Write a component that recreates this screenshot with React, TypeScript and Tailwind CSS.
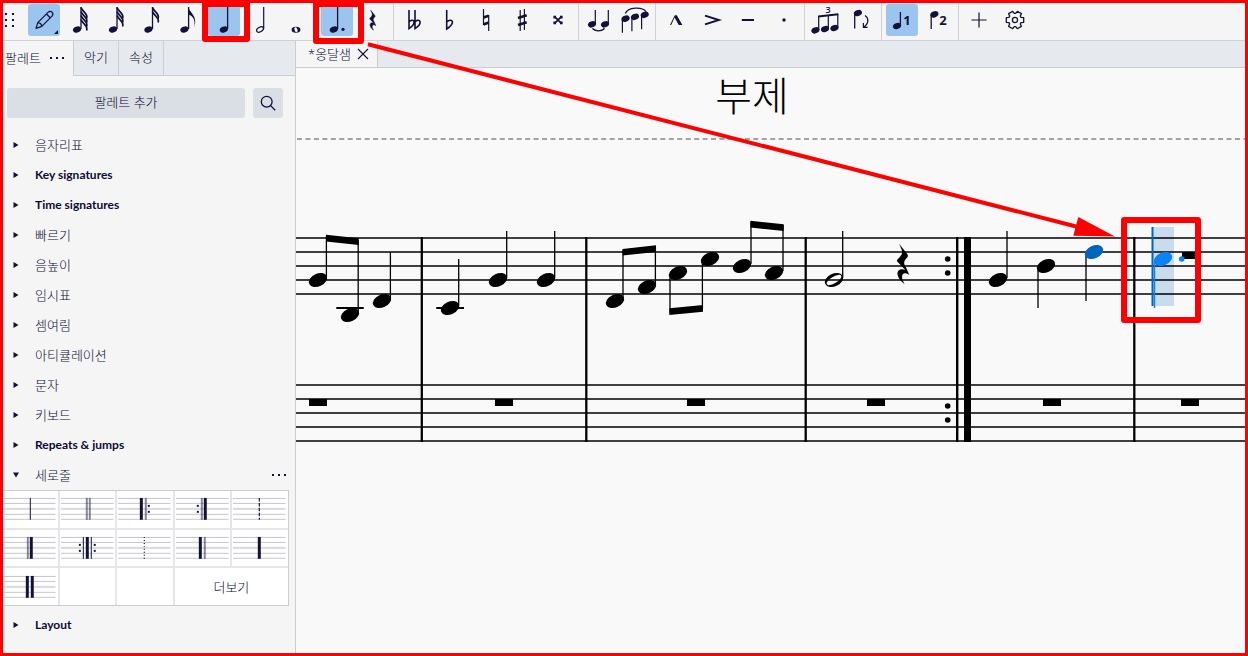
import { useState, type ReactNode } from 'react';
import clsx from 'clsx';

const INK = '#11113a';

type HeadProps = { x: number; y: number; fill?: string };

function SmallHead({ x, y, fill = INK }: HeadProps) {
  return <ellipse cx={x} cy={y} rx="4.2" ry="3" fill={fill} transform={`rotate(-22 ${x} ${y})`} />;
}

// Short note value with one to four flags
function FlaggedNote({ flags, head, stem }: { flags: number; head: number; stem: number }) {
  return (
    <>
      <SmallHead x={head} y={25.5} />
      <path d={`M${stem} 3V25`} stroke={INK} strokeWidth="1.3" />
      {flags === 1 ? (
        <path
          d={`M${stem} 3C${stem + 0.6} 9 ${stem + 10} 12 ${stem + 5.4} 23.6C${stem + 7.6} 14.6 ${stem + 3} 12 ${stem} 10.6Z`}
          fill={INK}
        />
      ) : (
        Array.from({ length: flags }, (_, i) => {
          const y = 3.5 + i * 4;
          return (
            <path
              key={i}
              d={`M${stem} ${y}C${stem + 1} ${y + 4} ${stem + 7.6} ${y + 6} ${stem + 5.6} ${y + 11}`}
              fill="none"
              stroke={INK}
              strokeWidth="1.7"
            />
          );
        })
      )}
    </>
  );
}

const gearPoints = [0, 1, 2, 3, 4, 5]
  .flatMap((tooth) =>
    [
      [-24, 6.6],
      [-15, 9],
      [15, 9],
      [24, 6.6],
    ].map(([offset, r]) => {
      const a = ((tooth * 60 + offset) * Math.PI) / 180;
      return `${(16 + r * Math.cos(a)).toFixed(2)},${(16 + r * Math.sin(a)).toFixed(2)}`;
    })
  )
  .join(' ');

const REST_PATH =
  'M2.3 0L10 9.6C11.8 11.8 11.6 12.6 10 14.2C6.8 17.6 6.8 19.6 9 23L12.6 31.4C9.6 29 6.3 28.8 5.5 31.8C4.9 34.6 6 37.2 8 40.5C3.4 37.2 0 32.4 0.9 28.6C1.8 25.4 5.2 24.6 8.6 26.4L0.3 17.6C0 16.6 0.4 16 1.4 15C5 11.6 6.3 9.4 4.8 5.6Z';

type Tool = { id: string; label: string; art: ReactNode };

const durations: Tool[] = [
  { id: '64th', label: '64th note', art: <FlaggedNote flags={4} head={13} stem={17} /> },
  { id: '32nd', label: '32nd note', art: <FlaggedNote flags={3} head={13} stem={17} /> },
  { id: '16th', label: '16th note', art: <FlaggedNote flags={2} head={12.4} stem={16.5} /> },
  { id: '8th', label: 'Eighth note', art: <FlaggedNote flags={1} head={12.4} stem={16.6} /> },
  {
    id: 'quarter',
    label: 'Quarter note',
    art: (
      <>
        <SmallHead x={15.8} y={25.5} />
        <path d="M19.6 3V25" stroke={INK} strokeWidth="1.3" />
      </>
    ),
  },
  {
    id: 'half',
    label: 'Half note',
    art: (
      <>
        <ellipse cx="16" cy="25.5" rx="3.7" ry="2.2" fill="none" stroke={INK} strokeWidth="1.2" transform="rotate(-28 16 25.5)" />
        <path d="M19.7 3V25" stroke={INK} strokeWidth="1.2" />
      </>
    ),
  },
  {
    id: 'whole',
    label: 'Whole note',
    art: (
      <>
        <ellipse cx="16" cy="25.7" rx="4.4" ry="3" fill={INK} />
        <ellipse cx="16" cy="25.7" rx="1.5" ry="2.5" fill="#f5f5f6" transform="rotate(-20 16 25.7)" />
      </>
    ),
  },
];

const rhythm: Tool[] = [
  {
    id: 'dot',
    label: 'Augmentation dot',
    art: (
      <>
        <SmallHead x={12.8} y={25.5} />
        <path d="M16.6 3V25" stroke={INK} strokeWidth="1.3" />
        <circle cx="22" cy="25.3" r="1.6" fill={INK} />
      </>
    ),
  },
  {
    id: 'rest',
    label: 'Rest',
    art: <path d={REST_PATH} fill={INK} stroke={INK} strokeWidth="1" transform="translate(12.6 6.3) scale(.49)" />,
  },
];

const accidentals: Tool[] = [
  {
    id: 'double-flat',
    label: 'Double flat',
    art: (
      <path
        d="M11 6V24.5C14 22.6 16.4 20.4 16 17.6C15.6 15.6 12.6 16 11 18M17 6V24.5C20.4 22.4 22.6 20.2 22 17.6C21.4 15.6 18.6 16 17 18"
        fill="none"
        stroke={INK}
        strokeWidth="1.6"
      />
    ),
  },
  {
    id: 'flat',
    label: 'Flat',
    art: <path d="M12.7 6V25C16 22.8 18.8 20.2 18.4 17.6C18 15.6 14.8 15.8 12.7 18" fill="none" stroke={INK} strokeWidth="1.6" />,
  },
  {
    id: 'natural',
    label: 'Natural',
    art: (
      <>
        <path d="M13.5 5V21M18.7 11V27" stroke={INK} strokeWidth="1.2" />
        <path d="M13.5 13.6L18.7 11.8M13.5 20.4L18.7 18.6" stroke={INK} strokeWidth="2.6" />
      </>
    ),
  },
  {
    id: 'sharp',
    label: 'Sharp',
    art: (
      <>
        <path d="M14.2 6V27M18.4 5V26" stroke={INK} strokeWidth="1.2" />
        <path d="M12 14L20.7 11.2M12 21L20.7 18.2" stroke={INK} strokeWidth="2.6" />
      </>
    ),
  },
  {
    id: 'double-sharp',
    label: 'Double sharp',
    art: (
      <>
        <path d="M12.4 12.4L19.6 19.6M19.6 12.4L12.4 19.6" stroke={INK} strokeWidth="1.6" />
        <path d="M11.4 11.8h2.6v2.6h-2.6zM18 11.8h2.6v2.6h-2.6zM11.4 17.6h2.6v2.6h-2.6zM18 17.6h2.6v2.6h-2.6z" fill={INK} />
      </>
    ),
  },
];

const phrasing: Tool[] = [
  {
    id: 'tie',
    label: 'Tie',
    art: (
      <>
        <SmallHead x={9} y={20.3} />
        <SmallHead x={22} y={20.3} />
        <path d="M12.3 6V20M25.3 6V20" stroke={INK} strokeWidth="1.2" />
        <path d="M9.5 24.4C12 27.6 19 27.6 21.5 24.4" fill="none" stroke={INK} strokeWidth="1.3" />
      </>
    ),
  },
  {
    id: 'slur',
    label: 'Slur',
    art: (
      <>
        <SmallHead x={6.6} y={14.6} />
        <SmallHead x={16} y={12.8} />
        <SmallHead x={25.7} y={10.8} />
        <path d="M3.4 15V28.7M12.9 13V27.3M22.6 11V25.3" stroke={INK} strokeWidth="1.2" />
        <path d="M6.3 9.6C9 3 23 2.4 27 7.6" fill="none" stroke={INK} strokeWidth="1.3" />
      </>
    ),
  },
];

const articulations: Tool[] = [
  { id: 'marcato', label: 'Marcato', art: <path d="M10 21L14.8 11.3H16.8L22.4 21H18.7L14.6 13.6L11.2 21Z" fill={INK} /> },
  { id: 'accent', label: 'Accent', art: <path d="M9 11.6L22.8 16L9 20.4" fill="none" stroke={INK} strokeWidth="2" /> },
  { id: 'tenuto', label: 'Tenuto', art: <path d="M9.8 16H22" stroke={INK} strokeWidth="2" /> },
  { id: 'staccato', label: 'Staccato', art: <circle cx="16" cy="16" r="1.7" fill={INK} /> },
];

const tuplets: Tool[] = [
  {
    id: 'tuplet',
    label: 'Tuplet',
    art: (
      <>
        <SmallHead x={6.4} y={26.3} />
        <SmallHead x={16} y={25} />
        <SmallHead x={25.4} y={24} />
        <path d="M9.7 12V26M19.3 11V25M28.8 10V24" stroke={INK} strokeWidth="1.2" />
        <path d="M9.2 12.4L29.3 10.3" stroke={INK} strokeWidth="2" />
        <text x="19" y="9" textAnchor="middle" fontSize="9" fontWeight="600" fill={INK}>
          3
        </text>
      </>
    ),
  },
  {
    id: 'flip',
    label: 'Flip direction',
    art: (
      <>
        <SmallHead x={12.9} y={9} />
        <path d="M9.7 9.5V24.6" stroke={INK} strokeWidth="1.3" />
        <path d="M20 11.5C24 14 24 19.5 18.8 23M18.4 19V23.4H22.6" fill="none" stroke={INK} strokeWidth="1.2" />
      </>
    ),
  },
];

const voices: Tool[] = [
  {
    id: 'voice1',
    label: 'Voice 1',
    art: (
      <>
        <SmallHead x={11} y={22} />
        <path d="M14.4 8V22" stroke={INK} strokeWidth="1.3" />
        <text x="21" y="21" textAnchor="middle" fontSize="13" fontWeight="700" fill={INK}>
          1
        </text>
      </>
    ),
  },
  {
    id: 'voice2',
    label: 'Voice 2',
    art: (
      <>
        <SmallHead x={12.4} y={10.4} />
        <path d="M9.2 11V25" stroke={INK} strokeWidth="1.3" />
        <text x="21" y="21" textAnchor="middle" fontSize="13" fontWeight="700" fill={INK}>
          2
        </text>
      </>
    ),
  },
];

const extras: Tool[] = [
  { id: 'add', label: 'Add', art: <path d="M8.4 16H23.6M16 8.4V23.6" stroke={INK} strokeWidth="1.2" /> },
  {
    id: 'settings',
    label: 'Customize toolbar',
    art: (
      <g fill="none" stroke={INK} strokeWidth="1.3" strokeLinejoin="round">
        <polygon points={gearPoints} />
        <circle cx="16" cy="16" r="2.6" />
      </g>
    ),
  },
];

const noteInput: Tool = {
  id: 'note-input',
  label: 'Note input',
  art: (
    <>
      <path
        d="M8 24.4L9.8 18.6L20 8.4C21.4 7 23 7.2 24.1 8.2C25.2 9.4 25.2 10.8 24 12.2L13.8 22.4ZM18.4 10L22.4 14M9.8 18.6C11.8 18.8 13.6 20.4 13.8 22.4"
        fill="none"
        stroke={INK}
        strokeWidth="1.2"
        strokeLinejoin="round"
      />
      <path d="M30 26V30H26Z" fill={INK} />
    </>
  ),
};

function ToolButton({ tool, active, onClick }: { tool: Tool; active: boolean; onClick: () => void }) {
  return (
    <button
      type="button"
      aria-label={tool.label}
      aria-pressed={active}
      onClick={onClick}
      className={clsx('h-8 w-8 shrink-0 rounded-[3px]', active && 'bg-[#9bc5ee]')}
    >
      <svg viewBox="0 0 32 32" className="h-8 w-8 overflow-visible">
        {tool.art}
      </svg>
    </button>
  );
}

function Toolbar() {
  const [active, setActive] = useState(['note-input', 'quarter', 'dot', 'voice1']);

  const toggle = (id: string) =>
    setActive((prev) => (prev.includes(id) ? prev.filter((a) => a !== id) : [...prev, id]));

  const groups = [durations, rhythm, accidentals, phrasing, articulations, tuplets, voices, extras];

  return (
    <div role="toolbar" className="flex h-[41px] shrink-0 border-b border-[#cfd1d5] bg-[#f5f5f6]">
      <svg viewBox="0 0 28 40" className="h-10 w-7 shrink-0" fill={INK}>
        {[14, 20, 26].map((y) => (
          <g key={y}>
            <rect x="5" y={y - 1} width="2" height="2" />
            <rect x="12" y={y - 1} width="2" height="2" />
          </g>
        ))}
      </svg>
      <div className="flex items-center">
        <ToolButton tool={noteInput} active={active.includes('note-input')} onClick={() => toggle('note-input')} />
      </div>
      {groups.map((group, i) => (
        <div
          key={i}
          className={clsx('flex items-center gap-1 px-1', i < groups.length - 1 && 'border-r border-[#cfd1d5]')}
        >
          {group.map((tool) => (
            <ToolButton key={tool.id} tool={tool} active={active.includes(tool.id)} onClick={() => toggle(tool.id)} />
          ))}
        </div>
      ))}
    </div>
  );
}

const palettes = [
  '음자리표',
  'Key signatures',
  'Time signatures',
  '빠르기',
  '음높이',
  '임시표',
  '셈여림',
  '아티큘레이션',
  '문자',
  '키보드',
  'Repeats & jumps',
  '세로줄',
  'Layout',
];

// Strokes are [x, width, opacity]; dots are the x of a repeat sign
type Barline = { name: string; strokes?: number[][]; dots?: number[]; dash?: string };

const barlines: Barline[] = [
  { name: 'Normal', strokes: [[28, 1, 1]] },
  { name: 'Double', strokes: [[26, 2, 0.5], [29, 2, 0.5]] },
  { name: 'Start repeat', strokes: [[23, 3, 1], [28, 2, 0.5]], dots: [32] },
  { name: 'End repeat', strokes: [[26, 2, 0.5], [29, 3, 1]], dots: [23] },
  { name: 'Dashed', dash: '3.5 1.5' },
  { name: 'Final', strokes: [[25, 2, 0.5], [28, 3, 1]] },
  { name: 'End-start repeat', strokes: [[23, 1, 1], [26, 3, 1], [31, 1, 1]], dots: [20, 35] },
  { name: 'Dotted', dash: '1 2' },
  { name: 'Reverse final', strokes: [[24, 3, 1], [29, 2, 0.5]] },
  { name: 'Heavy', strokes: [[26, 3, 1]] },
  { name: 'Heavy double', strokes: [[24, 3, 1], [29, 3, 1]] },
];

function BarlineArt({ bar }: { bar: Barline }) {
  return (
    <svg viewBox="0 0 56 36" className="w-full">
      <g fill="#c5c5cd">
        <rect x="1" y="7" width="53" height="1" />
        <rect x="1" y="12" width="53" height="1" />
        <rect x="1" y="17" width="53" height="2" opacity=".65" />
        <rect x="1" y="23" width="53" height="1" />
        <rect x="1" y="28" width="53" height="1" />
      </g>
      {bar.dash && <path d="M27.5 7V29" stroke={INK} strokeWidth="1.2" strokeDasharray={bar.dash} />}
      {bar.strokes?.map(([x, w, opacity]) => (
        <rect key={x} x={x} y="7" width={w} height="22" fill={INK} opacity={opacity} />
      ))}
      {bar.dots?.map((x) => (
        <g key={x} fill={INK}>
          <rect x={x - 1} y="14" width="2" height="2" />
          <rect x={x - 1} y="20" width="2" height="2" />
        </g>
      ))}
    </svg>
  );
}

function BarlinePalette() {
  return (
    <div className="mb-1 mr-1.5 grid h-[116px] grid-cols-5 grid-rows-3 gap-0.5 border border-[#cccdd2] bg-[#e6e6e8]">
      {barlines.map((bar) => (
        <button key={bar.name} type="button" aria-label={bar.name} className="flex items-center bg-white">
          <BarlineArt bar={bar} />
        </button>
      ))}
      <div className="bg-white" />
      <div className="bg-white" />
      <button type="button" className="col-span-2 bg-white">
        더보기
      </button>
    </div>
  );
}

function MoreDots() {
  return (
    <svg viewBox="0 0 16 4" className="h-1 w-4" fill={INK}>
      <rect x="1" y="1" width="2" height="2" />
      <rect x="7" y="1" width="2" height="2" />
      <rect x="13" y="1" width="2" height="2" />
    </svg>
  );
}

function PalettePanel() {
  const [open, setOpen] = useState('세로줄');

  return (
    <aside className="flex w-[296px] shrink-0 flex-col border-r border-[#cccdd2] bg-[#f5f5f6]">
      <div role="tablist" className="flex h-[35px] shrink-0">
        <div className="flex w-[73px] items-center gap-2 pb-0.5 pl-[5px]">
          <button type="button" role="tab" aria-selected="true">
            팔레트
          </button>
          <button type="button" aria-label="Palette options">
            <MoreDots />
          </button>
        </div>
        <div className="flex flex-1 border-b border-l border-[#cccdd2] bg-[#e6e9ed]">
          <button type="button" role="tab" aria-selected="false" className="w-[45px] border-r border-[#cccdd2] pb-0.5">
            악기
          </button>
          <button type="button" role="tab" aria-selected="false" className="w-[45px] border-r border-[#cccdd2] pb-0.5">
            속성
          </button>
        </div>
      </div>

      <div className="flex gap-2 py-3 pl-[7px] pr-3">
        <button type="button" className="h-[30px] flex-1 rounded-[3px] bg-[#dadee5] pb-0.5">
          팔레트 추가
        </button>
        <button
          type="button"
          aria-label="Search"
          className="flex h-[30px] w-[30px] items-center justify-center rounded-[3px] bg-[#dadee5]"
        >
          <svg viewBox="0 0 16 16" className="h-4 w-4" fill="none" stroke={INK} strokeWidth="1.3">
            <circle cx="6.7" cy="6.7" r="5.4" />
            <path d="M10.6 10.6L15.2 15.2" />
          </svg>
        </button>
      </div>

      <ul className="pl-px">
        {palettes.map((name) => {
          const expanded = open === name;
          return (
            <li key={name}>
              <div className="flex h-[30px] items-center pr-2">
                <button
                  type="button"
                  aria-expanded={expanded}
                  onClick={() => setOpen(expanded ? '' : name)}
                  className="flex h-full flex-1 items-center gap-4 pl-3 text-left"
                >
                  <svg viewBox="0 0 6 6" className="h-1.5 w-1.5" fill={INK}>
                    <path d={expanded ? 'M0 .5H6L3 5.5Z' : 'M.5 0V6L5.5 3Z'} />
                  </svg>
                  <span className={clsx(/^[A-Z]/.test(name) && "font-['Lato',sans-serif] text-xs font-bold")}>
                    {name}
                  </span>
                </button>
                {expanded && (
                  <button type="button" aria-label={`${name} options`}>
                    <MoreDots />
                  </button>
                )}
              </div>
              {expanded && <BarlinePalette />}
            </li>
          );
        })}
      </ul>
    </aside>
  );
}

function NoteHead({ x, y, fill = '#000' }: HeadProps) {
  return <ellipse cx={x} cy={y} rx="9.6" ry="6.4" fill={fill} transform={`rotate(-25 ${x} ${y})`} />;
}

const heads = [
  [318, 280], [350, 315], [382, 301], [450, 308], [498, 280], [546, 280],
  [615, 301], [647, 287], [678, 273], [710, 259], [742, 266], [774, 273],
  [998, 280], [1046, 266],
];

// x, top, bottom
const stems = [
  [326.4, 236, 278], [358.2, 240, 313], [390.4, 252, 299], [458.7, 259, 306], [506.7, 231, 278], [554.7, 231, 278],
  [623, 250, 299], [655.4, 247, 285], [670, 275, 313], [702.4, 261, 310], [751, 222, 264], [783, 225, 271],
  [842.7, 231, 278], [1007, 231, 278], [1038, 268, 308], [1086, 254, 301],
];

const beams = [
  '326,234.7 358.7,238.3 358.7,245 326,241.5',
  '622.5,249 656,245.3 656,252 622.5,255.6',
  '669.4,308.3 703,305 703,311.7 669.4,315',
  '750.4,220.7 783.7,224.3 783.7,231 750.4,227.5',
];

const wholeRests = [309, 495, 687, 867, 1043, 1181];

function Score() {
  return (
    <svg className="min-h-0 w-full flex-1 bg-[#f9f9fa]" role="img" aria-label="옹달샘">
      {/* the score view is scrolled to this origin */}
      <g transform="translate(-296 -68)">
        <text x="752" y="111" textAnchor="middle" fontSize="40" fontWeight="300" fill="#000">
          부제
        </text>
        <line x1="297" x2="200%" y1="139" y2="139" stroke="#a3a3a6" strokeWidth="2" strokeDasharray="5 3.45" />

        <rect x="1152" y="227" width="22" height="79" fill="#c9dcee" />
        {[238, 252, 266, 280, 294, 385, 399, 413, 427, 441].map((y) => (
          <line key={y} x1="296" x2="200%" y1={y} y2={y} stroke="#000" strokeWidth="1.6" />
        ))}

        {[421.8, 586.3, 805.7, 1134.3].map((x) => (
          <line key={x} x1={x} x2={x} y1="237" y2="442" stroke="#000" strokeWidth="2.3" />
        ))}
        <rect x="956" y="237" width="2.4" height="205" />
        <rect x="964" y="237" width="7" height="205" />
        {[259, 273, 406, 420].map((y) => (
          <circle key={y} cx="947.7" cy={y} r="2.8" />
        ))}

        {stems.map(([x, y1, y2]) => (
          <line key={x} x1={x} x2={x} y1={y1} y2={y2} stroke="#000" strokeWidth="1.3" />
        ))}
        {beams.map((points) => (
          <polygon key={points} points={points} />
        ))}
        <path d="M336.3 308H363.7M436.3 308H464" stroke="#000" strokeWidth="2" />
        {heads.map(([x, y]) => (
          <NoteHead key={x} x={x} y={y} />
        ))}

        <NoteHead x={834} y={280} />
        <ellipse cx="834" cy="280" rx="8.4" ry="3.2" fill="#f9f9fa" transform="rotate(-31 834 280)" />
        <line x1="826" x2="842" y1="280" y2="280" stroke="#000" strokeWidth="1.5" />
        <path d={REST_PATH} transform="translate(896.7 243.7)" />

        {wholeRests.map((x) => (
          <rect key={x} x={x} y="399" width="18" height="7" />
        ))}
        <rect x="1182" y="252" width="18" height="7" />

        <NoteHead x={1094} y={252} fill="#0065bf" />
        <rect x="1151.5" y="227" width="2" height="79" fill="#0065bf" />
        <line x1="1154.5" x2="1154.5" y1="261" y2="308" stroke="#0a84f5" strokeWidth="1.4" />
        <NoteHead x={1163} y={259} fill="#0a84f5" />
        <circle cx="1181.7" cy="259" r="2.8" fill="#0a84f5" />
      </g>
    </svg>
  );
}

function Annotations() {
  return (
    <div className="pointer-events-none absolute inset-0 border-[3px] border-[#ff0000]">
      <svg className="absolute -left-[3px] -top-[3px] h-full w-full overflow-visible">
        <g fill="none" stroke="#ff0000" strokeWidth="6" strokeLinejoin="round">
          <rect x="205" y="4" width="42" height="35" />
          <rect x="316" y="4" width="45" height="37" />
          <rect x="1124" y="220" width="74" height="100" />
        </g>
        <path d="M368 44.3L1078 227" stroke="#ff0000" strokeWidth="4" />
        <path d="M1078.3 217L1115 236.4L1073.3 235.7Z" fill="#ff0000" />
      </svg>
    </div>
  );
}

export default function App() {
  return (
    <div className="relative flex min-h-screen flex-col overflow-hidden bg-[#f5f5f6] font-['Open_Sans','Noto_Sans_CJK_KR',sans-serif] text-[13px] font-light leading-5 text-[#0b0b34]">
      <Toolbar />
      <div className="flex flex-1">
        <PalettePanel />
        <main className="flex min-w-0 flex-1 flex-col">
          <div role="tablist" className="flex h-[27px] shrink-0 border-b border-[#cccdd2] bg-[#e6e9ed]">
            <div className="flex items-center gap-1.5 border-r border-[#cccdd2] bg-[#f5f5f6] pl-3 pr-2">
              <button type="button" role="tab" aria-selected="true">
                *옹달샘
              </button>
              <button type="button" aria-label="Close">
                <svg viewBox="0 0 12 12" className="h-3 w-3" stroke={INK} strokeWidth="1.1">
                  <path d="M1 1L11 11M11 1L1 11" />
                </svg>
              </button>
            </div>
          </div>
          <Score />
        </main>
      </div>
      <Annotations />
    </div>
  );
}
